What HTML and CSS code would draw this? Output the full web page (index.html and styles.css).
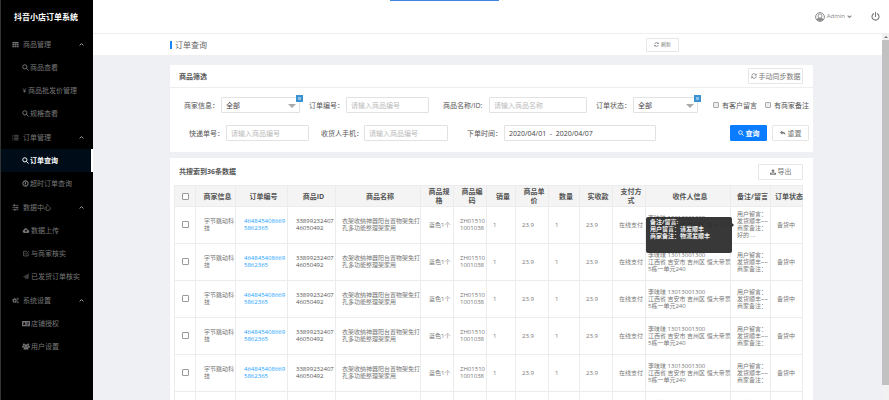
FILE: index.html
```html
<!DOCTYPE html>
<html lang="zh-CN">

<head>
    <meta charset="UTF-8">
    <meta name="viewport" content="width=device-width, initial-scale=1.0">
    <title>抖音小店订单系统</title>
    <link rel="stylesheet" href="styles.css">
</head>

<body>
    <svg class="sprite" aria-hidden="true">
        <symbol id="i-grid" viewBox="0 0 16 16"><path d="M1 2h14v3H1zM1 6.500h4v3H1zM6 6.500h4v3H6zM11 6.500h4v3h-4zM1 11h4v3H1zM6 11h4v3H6zM11 11h4v3h-4z" fill="currentColor"/></symbol>
        <symbol id="i-list" viewBox="0 0 16 16"><path d="M1 3h2M5 3h10M1 6.500h2M5 6.500h10M1 10h2M5 10h10M1 13.500h2M5 13.500h10" stroke="currentColor" stroke-width="1.500"/></symbol>
        <symbol id="i-sliders" viewBox="0 0 16 16"><path d="M1 3h14M1 8h14M1 13h14" stroke="currentColor" stroke-width="1.500"/><path d="M4 1h3v4H4zM10 6h3v4h-3zM5 11h3v4H5z" fill="currentColor"/></symbol>
        <symbol id="i-cogs" viewBox="0 0 16 16"><g fill="none" stroke="currentColor"><circle cx="6" cy="8" r="3.200" stroke-width="2.400"/><circle cx="6" cy="8" r="5" stroke-width="1.600" stroke-dasharray="2 1.930"/><circle cx="13" cy="4" r="1.700" stroke-width="1.600"/><circle cx="13" cy="12" r="1.700" stroke-width="1.600"/></g></symbol>
        <symbol id="i-search" viewBox="0 0 16 16"><g fill="none" stroke="currentColor" stroke-width="2.200"><circle cx="6.500" cy="6.500" r="4.800"/><path d="M10 10l5 5"/></g></symbol>
        <symbol id="i-yen" viewBox="0 0 16 16"><path d="M3 1l5 7 5-7M8 8v7M4 8.500h8M4 11.500h8" fill="none" stroke="currentColor" stroke-width="2"/></symbol>
        <symbol id="i-clock" viewBox="0 0 16 16"><g fill="none" stroke="currentColor" stroke-width="2.400"><circle cx="8" cy="8" r="6"/><path d="M8 4.500V9H6"/></g></symbol>
        <symbol id="i-cloud" viewBox="0 0 16 16"><path d="M4 13.500a3.600 3.600 0 0 1-1.200-7A4.800 4.800 0 0 1 12 6a3.800 3.800 0 0 1 .5 7.500zM8 5.500L4.800 9H7v3h2V9h2.200z" fill="currentColor" fill-rule="evenodd"/></symbol>
        <symbol id="i-check" viewBox="0 0 16 16"><path d="M13 8v5.500H2.500V3H10M5 7l3 3 6-7" fill="none" stroke="currentColor" stroke-width="1.500"/></symbol>
        <symbol id="i-plane" viewBox="0 0 16 16"><path d="M15 1l-2 13-4.500-2L6 15v-4l6-7-7.500 6L1 8.500z" fill="currentColor" opacity=".6"/></symbol>
        <symbol id="i-card" viewBox="0 0 18 16"><path d="M0 2h18v12H0zM2 11h6V9.500L6.500 8.500a2 2 0 1 0-3 0L2 9.500zM10 5v1.500h6V5zM10 8v1.500h6V8zM10 11v1h4v-1z" fill="currentColor" fill-rule="evenodd"/></symbol>
        <symbol id="i-users" viewBox="0 0 18 16"><g fill="currentColor"><circle cx="4" cy="3.500" r="2.500"/><circle cx="14" cy="3.500" r="2.500"/><circle cx="9" cy="6" r="3.200"/><path d="M0 10V7.500L2 6h3l1.500 3.500zM18 10V7.500L16 6h-3l-1.500 3.500zM3.500 15v-3L6 9.500h6l2.500 2.500v3z"/></g></symbol>
        <symbol id="i-up" viewBox="0 0 16 16"><path d="M2 11l6-6 6 6" fill="none" stroke="currentColor" stroke-width="3"/></symbol>
        <symbol id="i-down" viewBox="0 0 16 16"><path d="M2 5l6 6 6-6" fill="none" stroke="currentColor" stroke-width="3.500"/></symbol>
        <symbol id="i-refresh" viewBox="0 0 16 16"><path d="M2 7a6 6 0 0 1 10.500-3M14 9a6 6 0 0 1-10.500 3" fill="none" stroke="currentColor" stroke-width="2.200"/><path d="M15 1v5.500H9.500zM1 15V9.500h5.500z" fill="currentColor"/></symbol>
        <symbol id="i-reply" viewBox="0 0 16 16"><path d="M6 1v3.500c6 0 9 2.500 8 9.500-1-4-3-5-8-5v3.500L0 6.700z" fill="currentColor"/></symbol>
        <symbol id="i-upload" viewBox="0 0 16 16"><path d="M8 0l5 6h-3v5H6V6H3zM0 10h4.500v2.500h7V10H16v5H0z" fill="currentColor"/></symbol>
        <symbol id="i-user" viewBox="0 0 20 20"><circle cx="10" cy="10" r="8.800" fill="none" stroke="currentColor" stroke-width="2"/><circle cx="10" cy="8" r="4" fill="none" stroke="currentColor" stroke-width="1.800"/><path d="M3 14l4-2.500q3 2 6 0l4 2.500a8 8 0 0 1-14 0z" fill="currentColor"/></symbol>
        <symbol id="i-power" viewBox="0 0 18 18"><path d="M5 3.500a7 7 0 1 0 8 0M9 1v8" fill="none" stroke="currentColor" stroke-width="2.200" stroke-linecap="round"/></symbol>
    </svg>

    <div class="app">
        <nav class="sidebar">
            <h1 class="logo">抖音小店订单系统</h1>

            <div class="menu-group">
                <button class="menu-title"><svg><use href="#i-grid"/></svg>商品管理<svg class="arrow"><use href="#i-up"/></svg></button>
                <a class="menu-item" href="#"><svg><use href="#i-search"/></svg>商品查看</a>
                <a class="menu-item" href="#"><svg class="small"><use href="#i-yen"/></svg>商品批发价管理</a>
                <a class="menu-item" href="#"><svg><use href="#i-search"/></svg>规格查看</a>
            </div>

            <div class="menu-group">
                <button class="menu-title"><svg><use href="#i-list"/></svg>订单管理<svg class="arrow"><use href="#i-up"/></svg></button>
                <a class="menu-item active" href="#"><svg><use href="#i-search"/></svg>订单查询</a>
                <a class="menu-item" href="#"><svg><use href="#i-clock"/></svg>超时订单查询</a>
            </div>

            <div class="menu-group">
                <button class="menu-title"><svg><use href="#i-sliders"/></svg>数据中心<svg class="arrow"><use href="#i-up"/></svg></button>
                <a class="menu-item" href="#"><svg class="wide"><use href="#i-cloud"/></svg>数据上传</a>
                <a class="menu-item" href="#"><svg class="wide"><use href="#i-check"/></svg>与商家核实</a>
                <a class="menu-item" href="#"><svg class="wide"><use href="#i-plane"/></svg>已发货订单核实</a>
            </div>

            <div class="menu-group">
                <button class="menu-title"><svg><use href="#i-cogs"/></svg>系统设置<svg class="arrow"><use href="#i-up"/></svg></button>
                <a class="menu-item" href="#"><svg class="wide"><use href="#i-card"/></svg>店铺授权</a>
                <a class="menu-item" href="#"><svg class="wide"><use href="#i-users"/></svg>用户设置</a>
            </div>
        </nav>

        <div class="main">
            <header class="header">
                <span class="progress"></span>
                <button class="user"><svg class="avatar"><use href="#i-user"/></svg>Admin<svg class="caret"><use href="#i-down"/></svg></button>
                <button class="logout" aria-label="退出"><svg><use href="#i-power"/></svg></button>
            </header>

            <div class="scroll-wrapper">
                <div class="page">
                    <div class="page-title">
                        <h2>订单查询</h2>
                        <button class="btn btn-refresh"><svg><use href="#i-refresh"/></svg>刷新</button>
                    </div>

                    <div class="content">
                        <section class="panel filter">
                            <div class="panel-header">
                                <h3>商品筛选</h3>
                                <button class="btn btn-sync"><svg><use href="#i-refresh"/></svg>手动同步数据</button>
                            </div>
                            <form class="filter-form">
                                <div class="form-row row-first">
                                    <div class="field">
                                        <label for="shop">商家信息：</label>
                                        <div class="select-wrapper">
                                            <select id="shop"><option>全部</option></select>
                                            <span class="badge"></span>
                                        </div>
                                    </div>
                                    <div class="field">
                                        <label for="orderNo">订单编号：</label>
                                        <input type="text" id="orderNo" placeholder="请输入商品编号">
                                    </div>
                                    <div class="field field-name">
                                        <label for="goods">商品名称/ID:</label>
                                        <input type="text" id="goods" placeholder="请输入商品名称">
                                    </div>
                                    <div class="field">
                                        <label for="status">订单状态：</label>
                                        <div class="select-wrapper">
                                            <select id="status"><option>全部</option></select>
                                            <span class="badge"></span>
                                        </div>
                                    </div>
                                    <div class="checks">
                                        <label><input type="checkbox">有客户留言</label>
                                        <label><input type="checkbox">有商家备注</label>
                                    </div>
                                </div>
                                <div class="form-row row-second">
                                    <div class="field">
                                        <label for="express">快递单号：</label>
                                        <input type="text" id="express" placeholder="请输入商品编号">
                                    </div>
                                    <div class="field field-phone">
                                        <label for="phone">收货人手机：</label>
                                        <input type="text" id="phone" placeholder="请输入商品编号">
                                    </div>
                                    <div class="field field-date">
                                        <label for="date">下单时间：</label>
                                        <input type="text" id="date" value="2020/04/01  -  2020/04/07">
                                    </div>
                                    <div class="actions">
                                        <button type="button" class="btn btn-primary"><svg><use href="#i-search"/></svg>查询</button>
                                        <button type="reset" class="btn"><svg><use href="#i-reply"/></svg>重置</button>
                                    </div>
                                </div>
                            </form>
                        </section>

                        <section class="panel result">
                            <div class="result-header">
                                <h3>共搜索到36条数据</h3>
                                <button class="btn btn-export"><svg><use href="#i-upload"/></svg>导出</button>
                            </div>
                            <table>
                                <colgroup>
                                    <col class="w-check"><col class="w-shop"><col class="w-order"><col class="w-id"><col class="w-name">
                                    <col class="w-spec"><col class="w-spec"><col class="w-count"><col class="w-spec"><col class="w-num">
                                    <col class="w-spec"><col class="w-spec"><col class="w-name"><col class="w-shop"><col>
                                </colgroup>
                                <thead>
                                    <tr>
                                        <th class="center"><input type="checkbox" aria-label="全选"></th>
                                        <th>商家信息</th>
                                        <th>订单编号</th>
                                        <th>商品ID</th>
                                        <th>商品名称</th>
                                        <th>商品规<br>格</th>
                                        <th>商品编<br>码</th>
                                        <th>销量</th>
                                        <th>商品单<br>价</th>
                                        <th>数量</th>
                                        <th>实收款</th>
                                        <th>支付方<br>式</th>
                                        <th>收件人信息</th>
                                        <th>备注/留言</th>
                                        <th>订单状态</th>
                                    </tr>
                                </thead>
                                <tbody class="order-list"></tbody>
                            </table>
                        </section>
                    </div>
                </div>
                <div class="scrollbar" aria-hidden="true"><span class="scroll-up"></span><span class="thumb"></span></div>
            </div>
        </div>
    </div>

    <script>
        const orderList = document.querySelector('.order-list');

        const remark = '用户留言：<br>发货顺丰~~<br>商家备注：';

        const tooltip = `
            <div class="tooltip">
                备注/留言:<br>用户留言：请发顺丰<br>商家备注：物流发顺丰
            </div>
        `;

        const createRow = (index) => {
            return `
                <tr>
                    <td class="center"><input type="checkbox" aria-label="选择订单"></td>
                    <td>字节跳动科<br>技</td>
                    <td><a href="#">464845408669<br>5862365</a></td>
                    <td class="dark">33899232407<br>46050492</td>
                    <td class="medium">衣架收纳神器阳台置物架免打<br>孔多功能整理架家用</td>
                    <td>蓝色1个</td>
                    <td class="medium">ZH01510<br>1001038</td>
                    <td class="medium">1</td>
                    <td class="medium">23.9</td>
                    <td class="medium">1</td>
                    <td class="medium">23.9</td>
                    <td class="medium">在线支付</td>
                    <td class="tight">李味味 13013001300<br>江西省 吉安市 吉州区 恒大帝景<br>5栋一单元240</td>
                    <td class="medium remark">${remark}${index === 0 ? '<br>好的 ...' + tooltip : ''}</td>
                    <td class="medium">备货中</td>
                </tr>
            `;
        }

        for (let i = 0; i < 6; i++) {
            orderList.innerHTML += createRow(i);
        }
    </script>
</body>

</html>
```
FILE: styles.css
```css
* {
    box-sizing: border-box;
}

body {
    margin: 0;
    font-family: "Open Sans", "Noto Sans CJK SC", sans-serif;
    font-size: 7px;
    line-height: 9px;
    color: #555;
    background-color: #eff0f4;
}

h1, h2, h3 {
    margin: 0;
}

a {
    text-decoration: none;
}

button, input, select {
    font-family: inherit;
    font-size: 7px;
    line-height: 9px;
    color: inherit;
}

button {
    padding: 0;
    border: none;
    background: none;
    cursor: pointer;
}

svg {
    width: 7px;
    height: 7px;
    flex: none;
}

.sprite {
    display: none;
}

.app {
    display: flex;
    height: 100vh;
    overflow: hidden;
}

/* sidebar */
.sidebar {
    flex: none;
    width: 93px;
    background-color: #000;
    border-left: 1px solid #333;
}

.logo {
    height: 33px;
    padding-left: 13px;
    font-size: 8px;
    line-height: 33px;
    color: #fff;
    white-space: nowrap;
}

.menu-group {
    margin-bottom: 1px;
}

.menu-title, .menu-item {
    display: flex;
    align-items: center;
    width: 100%;
    height: 23px;
    color: #777;
    white-space: nowrap;
}

.menu-title {
    gap: 4px;
    padding: 0 9px 0 11px;
}

.menu-title .arrow {
    width: 5px;
    height: 5px;
    margin-left: auto;
    color: #aaa;
}

.menu-item {
    gap: 1px;
    padding-left: 21px;
}

.menu-item .small {
    width: 5px;
}

.menu-item .wide {
    width: 8px;
}

.menu-item.active {
    font-weight: bold;
    color: #fff;
    background-color: #000c18;
    border-right: 2px solid #fff;
}

/* header */
.main {
    display: flex;
    flex-direction: column;
    flex: 1;
    min-width: 0;
}

.header {
    position: relative;
    display: flex;
    flex: none;
    justify-content: flex-end;
    align-items: center;
    gap: 19px;
    height: 34px;
    padding-right: 9px;
    background-color: #fff;
    border-bottom: 1px solid #eceef3;
    color: #777;
}

.progress {
    position: absolute;
    top: 0;
    left: 297px;
    width: 109px;
    height: 1px;
    background-color: #3f87dc;
}

.user {
    display: flex;
    align-items: center;
    gap: 2px;
    font-size: 6px;
    color: #888;
}

.user .avatar {
    width: 10px;
    height: 10px;
}

.user .caret {
    width: 5px;
    height: 5px;
}

.logout svg {
    display: block;
    width: 9px;
    height: 9px;
}

.scroll-wrapper {
    display: flex;
    flex: 1;
    min-height: 0;
}

.page {
    flex: 1;
    min-width: 0;
    overflow: hidden;
}

.scrollbar {
    flex: none;
    width: 7px;
    padding-bottom: 15px;
    display: flex;
    flex-direction: column;
    align-items: center;
    background-color: #f1f1f1;
}

.scroll-up {
    margin: 2px 0;
    border: 2px solid transparent;
    border-top: none;
    border-bottom-color: #777;
}

.thumb {
    flex: 1;
    width: 7px;
    background-color: #c1c1c1;
}

.page-title {
    display: flex;
    justify-content: space-between;
    align-items: center;
    height: 21px;
    padding: 0 203px 0 77px;
    background-color: #fff;
}

.page-title h2 {
    padding-left: 3px;
    border-left: 2px solid #1684fc;
    font-size: 8px;
    line-height: 8px;
    font-weight: normal;
    color: #666;
}

/* buttons */
.btn {
    display: flex;
    justify-content: center;
    align-items: center;
    gap: 2px;
    width: 37px;
    height: 16px;
    border: 1px solid #e6e6e6;
    border-radius: 1px;
    background-color: #fff;
    color: #777;
    white-space: nowrap;
}

.btn svg {
    width: 6px;
    height: 6px;
}

.btn-refresh {
    width: 33px;
    height: 14px;
    font-size: 5px;
}

.btn-refresh svg {
    width: 5px;
    height: 5px;
}

.btn-sync {
    width: 55px;
}

.btn-export {
    width: 45px;
}

.btn-primary {
    border-color: #0a7cff;
    background-color: #0a7cff;
    font-weight: bold;
    color: #fff;
}

/* panels */
.content {
    padding: 10px 69px 0 77px;
}

.panel {
    margin-bottom: 6px;
    background-color: #fff;
}

.panel h3 {
    font-size: 7px;
    color: #555;
}

.panel-header {
    display: flex;
    justify-content: space-between;
    align-items: center;
    height: 23px;
    padding: 0 10px 0 9px;
    border-bottom: 1px solid #eee;
}

.filter-form {
    padding: 9px 4px 11px 14px;
}

.form-row {
    display: grid;
}

.row-first {
    grid-template-columns: 116fr 120fr 149fr 102fr 102fr;
    column-gap: 9px;
    margin-bottom: 12px;
}

.row-second {
    grid-template-columns: 120fr 127fr 196fr 141fr;
    column-gap: 12px;
    padding-left: 5px;
}

.field {
    display: flex;
    align-items: center;
    min-width: 0;
}

.field label {
    flex: none;
    width: 37px;
    white-space: nowrap;
}

.field-name {
    padding-left: 5px;
}

.field-name label {
    width: 46px;
}

.field-phone label {
    width: 43px;
}

.field-date {
    padding-left: 7px;
}

.field input, .select-wrapper {
    flex: 1;
    min-width: 0;
    height: 16px;
}

.field input, .field select {
    padding: 0 4px;
    border: 1px solid #e2e2e2;
    border-radius: 1px;
    background-color: #fff;
    color: #444;
    white-space: pre;
}

.field input::placeholder {
    color: #bbb;
}

.select-wrapper {
    position: relative;
}

.select-wrapper select {
    display: block;
    width: 100%;
    height: 16px;
    appearance: none;
}

.select-wrapper::after {
    content: "";
    position: absolute;
    top: 7px;
    right: 4px;
    border: 4px solid transparent;
    border-top-color: #aaa;
    border-bottom: none;
}

.badge {
    position: absolute;
    top: -2px;
    right: -3px;
    width: 7px;
    height: 7px;
    border: 2px solid #3b92d2;
    background-color: #8cc0e6;
}

.checks {
    display: flex;
    justify-content: space-between;
    align-items: center;
    padding-left: 6px;
}

.checks label {
    display: flex;
    align-items: center;
    gap: 3px;
    white-space: nowrap;
}

input[type="checkbox"] {
    appearance: none;
    flex: none;
    display: inline-block;
    width: 7px;
    height: 7px;
    margin: 0;
    border: 1px solid #999;
    border-radius: 1px;
    background-color: #fff;
    vertical-align: middle;
}

.checks input[type="checkbox"] {
    width: 6px;
    height: 6px;
    border-color: #aaa;
    background-color: #eee;
}

.actions {
    display: flex;
    justify-content: flex-end;
    gap: 5px;
}

/* result table */
.result {
    padding: 0 10px 0 4px;
}

.result-header {
    display: flex;
    justify-content: space-between;
    align-items: center;
    height: 27px;
    padding-left: 5px;
}

table {
    width: 100%;
    table-layout: fixed;
    border-collapse: collapse;
}

th, td {
    border: 1px solid #ececec;
}

th {
    height: 21px;
    padding: 0 0 0 4px;
    background-color: #f4f4f4;
    white-space: nowrap;
}

td {
    height: 37px;
    padding: 0 0 0 8px;
    font-size: 6px;
    line-height: 7px;
    color: #777;
    white-space: nowrap;
}

td a {
    color: #1e9fff;
}

.w-check {
    width: 21px;
}

.w-shop {
    width: 40px;
}

.w-order {
    width: 52px;
}

.w-id {
    width: 48px;
}

.w-name {
    width: 85px;
}

.w-spec {
    width: 33px;
}

.w-count {
    width: 29px;
}

.w-num {
    width: 31px;
}

.dark {
    color: #555;
}

.center {
    padding: 0;
    text-align: center;
}

.medium {
    padding-left: 6px;
}

.tight {
    padding-left: 2px;
}

.remark {
    position: relative;
}

.tooltip {
    position: absolute;
    top: 10px;
    right: 100%;
    width: 86px;
    height: 36px;
    margin-right: -1px;
    padding: 2px 4px;
    border-radius: 2px;
    background-color: rgba(45, 45, 45, 0.95);
    font-weight: bold;
    color: #eee;
}

.tooltip::after {
    content: "";
    position: absolute;
    top: 6px;
    left: 100%;
    border: 2px solid transparent;
    border-left-color: #333;
    border-right: none;
}
```
